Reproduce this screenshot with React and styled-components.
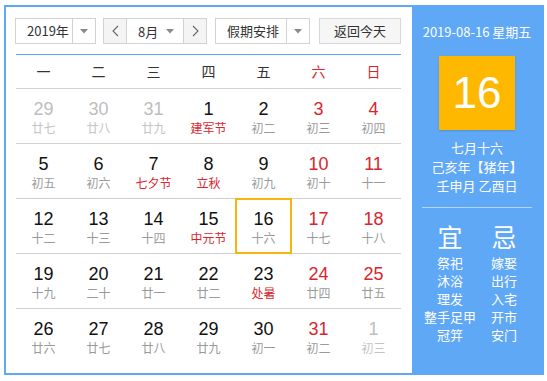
import styled, { createGlobalStyle } from 'styled-components'

const GlobalStyle = createGlobalStyle`
    html, body {
        margin: 0;
        padding: 0;
        background: #ffffff;
    }
    body {
        font-family: 'Liberation Sans', 'Noto Sans CJK SC', sans-serif;
    }
`

const BLUE = '#5fa8f6'
const RED = '#d9262c'
const CJK = `'Noto Sans CJK SC', 'Liberation Sans', sans-serif`

const weekdays = [
    { t: '一' },
    { t: '二' },
    { t: '三' },
    { t: '四' },
    { t: '五' },
    { t: '六', red: true },
    { t: '日', red: true },
]

// n: day number, l: lunar text, o: other month, r: red number (weekend), h: red lunar (festival)
const weeks = [
    [
        { n: 29, l: '廿七', o: true },
        { n: 30, l: '廿八', o: true },
        { n: 31, l: '廿九', o: true },
        { n: 1, l: '建军节', h: true },
        { n: 2, l: '初二' },
        { n: 3, l: '初三', r: true },
        { n: 4, l: '初四', r: true },
    ],
    [
        { n: 5, l: '初五' },
        { n: 6, l: '初六' },
        { n: 7, l: '七夕节', h: true },
        { n: 8, l: '立秋', h: true },
        { n: 9, l: '初九' },
        { n: 10, l: '初十', r: true },
        { n: 11, l: '十一', r: true },
    ],
    [
        { n: 12, l: '十二' },
        { n: 13, l: '十三' },
        { n: 14, l: '十四' },
        { n: 15, l: '中元节', h: true },
        { n: 16, l: '十六', sel: true },
        { n: 17, l: '十七', r: true },
        { n: 18, l: '十八', r: true },
    ],
    [
        { n: 19, l: '十九' },
        { n: 20, l: '二十' },
        { n: 21, l: '廿一' },
        { n: 22, l: '廿二' },
        { n: 23, l: '处暑', h: true },
        { n: 24, l: '廿四', r: true },
        { n: 25, l: '廿五', r: true },
    ],
    [
        { n: 26, l: '廿六' },
        { n: 27, l: '廿七' },
        { n: 28, l: '廿八' },
        { n: 29, l: '廿九' },
        { n: 30, l: '初一' },
        { n: 31, l: '初二', r: true },
        { n: 1, l: '初三', o: true },
    ],
]

const yi = ['祭祀', '沐浴', '理发', '整手足甲', '冠笄']
const ji = ['嫁娶', '出行', '入宅', '开市', '安门']

const Caret = () => (
    <svg width="8" height="5" viewBox="0 0 8 5">
        <path d="M0 0 L8 0 L4 4.5 Z" fill="#8a8a8a" />
    </svg>
)

const Chevron = ({ dir }) => (
    <svg width="7" height="12" viewBox="0 0 7 12">
        <polyline
            points={dir === 'left' ? '6,1 1,6 6,11' : '1,1 6,6 1,11'}
            fill="none"
            stroke="#666"
            strokeWidth="1.1"
        />
    </svg>
)

export default function App() {
    return (
        <Page>
            <GlobalStyle />
            <Widget>
                <Main>
                    <Toolbar>
                        <Select $w={81} $tw={57}>
                            <span>2019年</span>
                            <CaretBox>
                                <Caret />
                            </CaretBox>
                        </Select>
                        <MonthGroup>
                            <NavBtn>
                                <Chevron dir="left" />
                            </NavBtn>
                            <MonthLabel>
                                <span>8月</span>
                                <Caret />
                            </MonthLabel>
                            <NavBtn $right>
                                <Chevron dir="right" />
                            </NavBtn>
                        </MonthGroup>
                        <Select $w={95} $tw={71}>
                            <span>假期安排</span>
                            <CaretBox>
                                <Caret />
                            </CaretBox>
                        </Select>
                        <TodayBtn>返回今天</TodayBtn>
                    </Toolbar>
                    <Header>
                        {weekdays.map((d) => (
                            <HeadCell key={d.t} $red={d.red}>
                                {d.t}
                            </HeadCell>
                        ))}
                    </Header>
                    {weeks.map((week, i) => (
                        <Row key={i} $last={i === weeks.length - 1}>
                            {week.map((d, j) => (
                                <Cell key={j} $sel={d.sel}>
                                    <DayNum $other={d.o} $red={d.r}>
                                        {d.n}
                                    </DayNum>
                                    <Lunar $other={d.o} $red={d.h}>
                                        {d.l}
                                    </Lunar>
                                </Cell>
                            ))}
                        </Row>
                    ))}
                </Main>
                <Side>
                    <DateLine>2019-08-16 星期五</DateLine>
                    <BigDay>16</BigDay>
                    <LunarInfo>
                        <div>七月十六</div>
                        <div>己亥年【猪年】</div>
                        <div>壬申月 乙酉日</div>
                    </LunarInfo>
                    <Divider />
                    <Advice>
                        <AdviceCol>
                            <AdviceHead>宜</AdviceHead>
                            {yi.map((t) => (
                                <div key={t}>{t}</div>
                            ))}
                        </AdviceCol>
                        <AdviceCol>
                            <AdviceHead>忌</AdviceHead>
                            {ji.map((t) => (
                                <div key={t}>{t}</div>
                            ))}
                        </AdviceCol>
                    </Advice>
                </Side>
            </Widget>
        </Page>
    )
}

const Page = styled.div`
    padding: 5px 0 0 4px;
`
const Widget = styled.div`
    display: flex;
    width: 536px;
    height: 366px;
    border: 2px solid ${BLUE};
    background: #fff;
`
const Main = styled.div`
    width: 385px;
    padding: 11px 11px 0 10px;
    display: flex;
    flex-direction: column;
`
const Toolbar = styled.div`
    display: flex;
    height: 26px;
    margin-left: -1px;
    margin-bottom: 10px;
    font-family: ${CJK};
    font-size: 13px;
    color: #333;
`
const Select = styled.div`
    display: flex;
    width: ${(p) => p.$w}px;
    height: 26px;
    box-sizing: border-box;
    border: 1px solid #d2d2d2;
    background: #fff;
    & span {
        width: ${(p) => p.$tw - 1}px;
        line-height: 24px;
        padding-left: 11px;
        box-sizing: border-box;
    }
`
const CaretBox = styled.div`
    flex: 1;
    display: flex;
    align-items: center;
    justify-content: center;
    border-left: 1px solid #d2d2d2;
`
const MonthGroup = styled.div`
    display: flex;
    width: 104px;
    height: 26px;
    margin-left: 7px;
    margin-right: 8px;
    box-sizing: border-box;
    border: 1px solid #d2d2d2;
`
const NavBtn = styled.div`
    width: 22px;
    display: flex;
    align-items: center;
    justify-content: center;
    background: #f4f4f4;
    ${(p) =>
        p.$right
            ? 'border-left: 1px solid #d2d2d2;'
            : 'border-right: 1px solid #d2d2d2;'}
`
const MonthLabel = styled.div`
    flex: 1;
    display: flex;
    align-items: center;
    justify-content: space-between;
    padding: 0 9px 0 11px;
    background: #fff;
`
const TodayBtn = styled.div`
    width: 82px;
    height: 26px;
    margin-left: 9px;
    box-sizing: border-box;
    border: 1px solid #d8d8d8;
    background: #f6f6f6;
    line-height: 24px;
    text-align: center;
`
const Header = styled.div`
    display: grid;
    grid-template-columns: repeat(7, 55px);
    height: 33px;
    border-top: 1px solid ${BLUE};
    border-bottom: 1px solid #d0d0d0;
`
const HeadCell = styled.div`
    font-family: ${CJK};
    font-size: 14px;
    line-height: 33px;
    text-align: center;
    color: ${(p) => (p.$red ? RED : '#333')};
`
const Row = styled.div`
    display: grid;
    grid-template-columns: repeat(7, 55px);
    height: 54px;
    border-bottom: 1px solid ${(p) => (p.$last ? 'transparent' : '#d0d0d0')};
`
const Cell = styled.div`
    display: flex;
    flex-direction: column;
    align-items: center;
    padding-top: 10px;
    position: relative;
    ${(p) =>
        p.$sel &&
        `
        outline: 2px solid #f6b60c;
        outline-offset: -1px;
        z-index: 1;
    `}
`
const DayNum = styled.div`
    font-family: 'Liberation Sans', Arial, sans-serif;
    font-size: 18px;
    line-height: 20px;
    color: ${(p) => (p.$other ? '#bdbdbd' : p.$red ? RED : '#111')};
`
const Lunar = styled.div`
    margin-top: 1px;
    font-family: ${CJK};
    font-size: 12px;
    line-height: 16px;
    color: ${(p) => (p.$other ? '#c4c4c4' : p.$red ? RED : '#9a9a9a')};
`
const Side = styled.div`
    flex: 1;
    background: ${BLUE};
    display: flex;
    flex-direction: column;
    align-items: center;
    color: #fff;
    font-family: ${CJK};
`
const DateLine = styled.div`
    margin-top: 16px;
    font-size: 13px;
    line-height: 18px;
`
const BigDay = styled.div`
    margin-top: 15px;
    width: 76px;
    height: 74px;
    background: #ffb800;
    box-shadow: 0 1px 2px rgba(0, 0, 0, 0.15);
    font-family: 'Liberation Sans', Arial, sans-serif;
    font-size: 44px;
    line-height: 74px;
    text-align: center;
`
const LunarInfo = styled.div`
    margin-top: 8px;
    font-size: 13px;
    line-height: 19px;
    text-align: center;
`
const Divider = styled.div`
    margin-top: 12px;
    width: 110px;
    height: 1px;
    background: #b4d5fb;
`
const Advice = styled.div`
    display: flex;
    margin-top: 10px;
    font-size: 13px;
    line-height: 18px;
`
const AdviceCol = styled.div`
    width: 54px;
    text-align: center;
`
const AdviceHead = styled.div`
    font-size: 25px;
    line-height: 36px;
`
